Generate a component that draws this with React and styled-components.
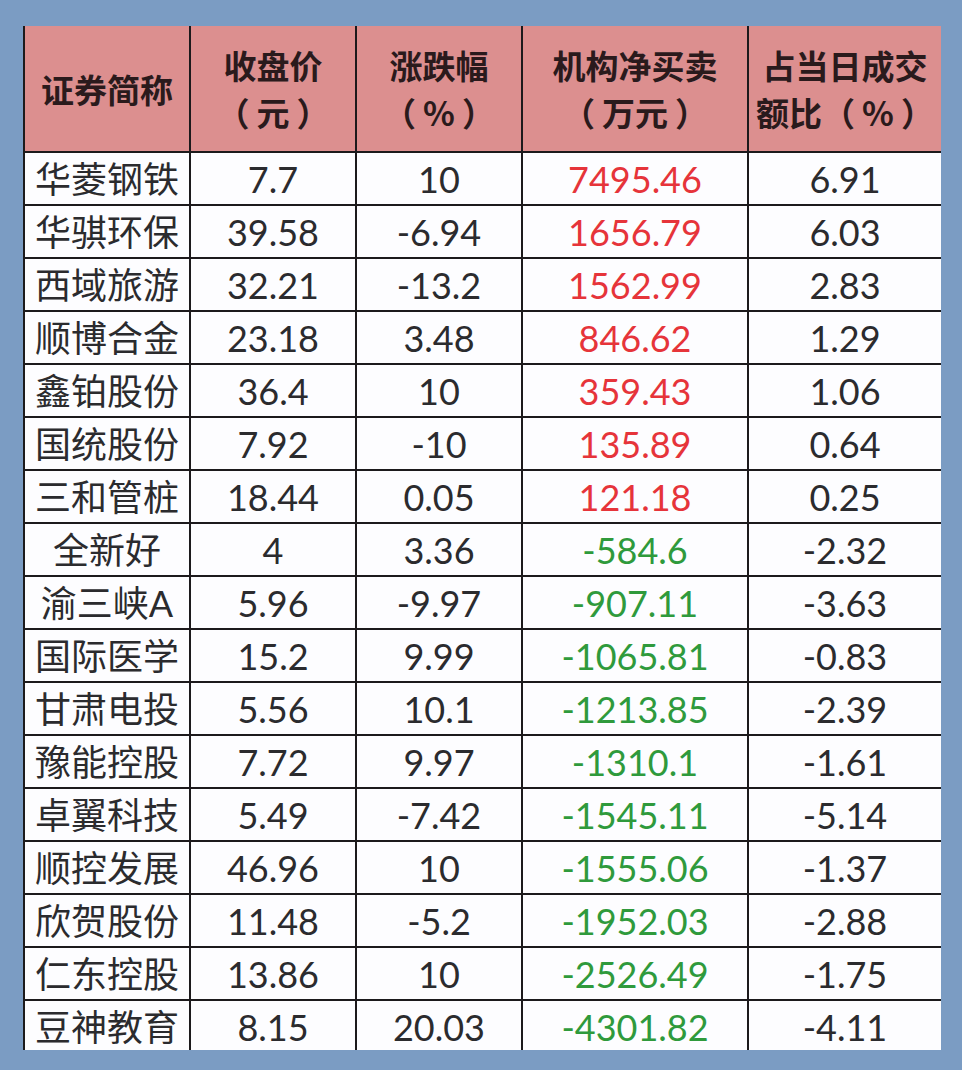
import React from "react";
import styled, { createGlobalStyle } from "styled-components";

const Global = createGlobalStyle`
  html, body { margin: 0; padding: 0; background: #7b9cc3; }
  body { font-family: "Lato", "Noto Sans CJK SC", sans-serif; }
`;

const Page = styled.div`
  width: 962px;
  height: 1070px;
  padding: 26px 0 0 23px;
  box-sizing: border-box;
  background: #7b9cc3;
`;

const Clip = styled.div`
  width: 918px;
  height: 1024px;
  overflow: hidden;
`;

const Table = styled.div`
  display: grid;
  grid-template-columns: 164px 164px 164px 224px 192px;
  grid-template-rows: 125px repeat(17, 51px);
  gap: 2px;
  padding-left: 2px;
  padding-bottom: 2px;
  background: #1c1a1c;
  width: 918px;
  box-sizing: border-box;
`;

const HeadCell = styled.div`
  background: #dc8f8f;
  display: flex;
  align-items: center;
  justify-content: center;
  text-align: center;
  font-family: "Noto Sans CJK SC", sans-serif;
  font-weight: 700;
  font-size: 33px;
  line-height: 47px;
  color: #2a1a1c;
  padding-top: ${(p) => (p.$single ? "2px" : "0")};
`;

const HeadLine = styled.div`
  white-space: nowrap;
`;

const Unit = styled.span`
  padding: 0 7px;
`;

const Cell = styled.div`
  background: #fdfdff;
  display: flex;
  align-items: center;
  justify-content: center;
  font-family: "Lato", "Noto Sans CJK SC", sans-serif;
  font-size: 36px;
  line-height: 1;
  color: ${(p) =>
    p.$tone === "up" ? "#e6343a" : p.$tone === "down" ? "#2f9a3c" : "#2b2b2e"};
  white-space: nowrap;
`;

const rows = [
  ["华菱钢铁", "7.7", "10", "7495.46", "6.91"],
  ["华骐环保", "39.58", "-6.94", "1656.79", "6.03"],
  ["西域旅游", "32.21", "-13.2", "1562.99", "2.83"],
  ["顺博合金", "23.18", "3.48", "846.62", "1.29"],
  ["鑫铂股份", "36.4", "10", "359.43", "1.06"],
  ["国统股份", "7.92", "-10", "135.89", "0.64"],
  ["三和管桩", "18.44", "0.05", "121.18", "0.25"],
  ["全新好", "4", "3.36", "-584.6", "-2.32"],
  ["渝三峡A", "5.96", "-9.97", "-907.11", "-3.63"],
  ["国际医学", "15.2", "9.99", "-1065.81", "-0.83"],
  ["甘肃电投", "5.56", "10.1", "-1213.85", "-2.39"],
  ["豫能控股", "7.72", "9.97", "-1310.1", "-1.61"],
  ["卓翼科技", "5.49", "-7.42", "-1545.11", "-5.14"],
  ["顺控发展", "46.96", "10", "-1555.06", "-1.37"],
  ["欣贺股份", "11.48", "-5.2", "-1952.03", "-2.88"],
  ["仁东控股", "13.86", "10", "-2526.49", "-1.75"],
  ["豆神教育", "8.15", "20.03", "-4301.82", "-4.11"],
];

const headers = [
  { title: "证券简称" },
  { title: "收盘价", unit: "元" },
  { title: "涨跌幅", unit: "%" },
  { title: "机构净买卖", unit: "万元" },
  { title: "占当日成交", prefix: "额比", unit: "%" },
];

export default function App() {
  return (
    <Page>
      <Global />
      <Clip>
        <Table>
          {headers.map((h, i) => (
            <HeadCell key={"h" + i} $single={!h.unit}>
              <div>
                <HeadLine>{h.title}</HeadLine>
                {h.unit && (
                  <HeadLine>
                    {h.prefix || ""}（<Unit>{h.unit}</Unit>）
                  </HeadLine>
                )}
              </div>
            </HeadCell>
          ))}
          {rows.map((r, ri) =>
            r.map((v, ci) => (
              <Cell
                key={ri + "-" + ci}
                $tone={ci === 3 ? (v.startsWith("-") ? "down" : "up") : undefined}
              >
                {v}
              </Cell>
            ))
          )}
        </Table>
      </Clip>
    </Page>
  );
}
